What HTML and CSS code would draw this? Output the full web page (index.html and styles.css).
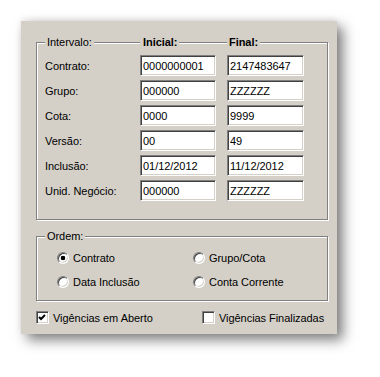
FILE: index.html
```html
<!DOCTYPE html>
<html lang="pt-BR">
<head>
  <meta charset="UTF-8">
  <title>Filtro de Vigências</title>
  <link rel="stylesheet" href="styles.css">
</head>
<body>

  <div class="panel">

    <div class="group group-intervalo">
      <div class="grid head">
        <span class="caption">Intervalo:</span>
        <span class="caption bold first">Inicial:</span>
        <span class="caption bold">Final:</span>
      </div>

      <div class="grid rows">
        <label>Contrato:</label>
        <input type="text" class="field" value="0000000001">
        <input type="text" class="field" value="2147483647">

        <label>Grupo:</label>
        <input type="text" class="field" value="000000">
        <input type="text" class="field" value="ZZZZZZ">

        <label>Cota:</label>
        <input type="text" class="field" value="0000">
        <input type="text" class="field" value="9999">

        <label>Versão:</label>
        <input type="text" class="field" value="00">
        <input type="text" class="field" value="49">

        <label>Inclusão:</label>
        <input type="text" class="field" value="01/12/2012">
        <input type="text" class="field" value="11/12/2012">

        <label>Unid. Negócio:</label>
        <input type="text" class="field" value="000000">
        <input type="text" class="field" value="ZZZZZZ">
      </div>
    </div>

    <div class="group group-ordem">
      <div class="head">
        <span class="caption">Ordem:</span>
      </div>

      <div class="options">
        <label class="option"><input type="radio" name="ordem" checked> Contrato</label>
        <label class="option"><input type="radio" name="ordem"> Grupo/Cota</label>
        <label class="option"><input type="radio" name="ordem"> Data Inclusão</label>
        <label class="option"><input type="radio" name="ordem"> Conta Corrente</label>
      </div>
    </div>

    <div class="checks">
      <label class="option">
        <input type="checkbox" checked>
        Vigências em Aberto
      </label>
      <label class="option">
        <input type="checkbox">
        Vigências Finalizadas
      </label>
    </div>

  </div>

</body>
</html>
```

FILE: styles.css
```css
:root {
  --face: #d4d0c8;
  --shadow: #808080;
  --dark: #404040;
  --light: #ffffff;
}

* {
  box-sizing: border-box;
}

body {
  margin: 0;
  padding: 21px;
  background: #fff;
  font-family: 'Liberation Sans', Arial, sans-serif;
  font-size: 11px;
  letter-spacing: -0.05px;
  color: #000;
}

.panel {
  width: 316px;
  height: 313px;
  padding: 21px 9px 0 15px;
  background: var(--face);
  box-shadow: 6px 6px 12px rgba(0, 0, 0, 0.5), 0 -2px 6px rgba(0, 0, 0, 0.08);
}

/* ---------- Grupos (bordas gravadas) ---------- */
.group {
  border: 1px solid var(--shadow);
  box-shadow: inset 1px 1px 0 var(--light), 1px 1px 0 var(--light);
  padding-left: 8px;
}

.head {
  margin-top: -7px;
  height: 13px;
  line-height: 13px;
}

.caption {
  background: var(--face);
  padding: 0 2px;
  justify-self: start;
}

.bold {
  font-weight: bold;
}

.first {
  padding-left: 3px;
}

.grid {
  display: grid;
  grid-template-columns: 84px 76px 77px;
  column-gap: 11px;
}

.group-intervalo {
  padding-bottom: 18px;
}

.rows {
  margin-top: 6px;
  row-gap: 4px;
  align-items: center;
}

.field {
  height: 21px;
  margin: 0;
  padding: 0 2px;
  border: 1px solid;
  border-color: var(--shadow) var(--light) var(--light) var(--shadow);
  box-shadow: inset 1px 1px 0 var(--dark), inset -1px -1px 0 var(--face);
  background: #fff;
  font: inherit;
  letter-spacing: inherit;
  color: #000;
  outline: none;
}

/* ---------- Ordem ---------- */
.group-ordem {
  margin-top: 16px;
  padding: 0 0 12px 20px;
}

.group-ordem .head {
  margin-left: -12px;
}

.options {
  display: grid;
  grid-template-columns: 136px auto;
  row-gap: 11px;
  margin-top: 8px;
}

.option {
  display: flex;
  align-items: center;
  gap: 4px;
  height: 13px;
  white-space: nowrap;
}

input[type="radio"] {
  appearance: none;
  -webkit-appearance: none;
  width: 12px;
  height: 12px;
  margin: 0;
  border-radius: 50%;
  border: 1px solid;
  border-color: var(--shadow) var(--light) var(--light) var(--shadow);
  box-shadow: inset 1px 1px 0 var(--dark), inset -1px -1px 0 var(--face);
  background: #fff;
}

input[type="radio"]:checked {
  background: radial-gradient(circle, #000 0, #000 2px, #fff 2.6px);
}

/* ---------- Checkboxes ---------- */
.checks {
  display: grid;
  grid-template-columns: 166px auto;
  margin-top: 10px;
}

input[type="checkbox"] {
  appearance: none;
  -webkit-appearance: none;
  width: 13px;
  height: 13px;
  margin: 0;
  border: 1px solid;
  border-color: var(--shadow) var(--light) var(--light) var(--shadow);
  box-shadow: inset 1px 1px 0 var(--dark), inset -1px -1px 0 var(--face);
  background: #fff;
}

input[type="checkbox"]:checked {
  background: #fff url("data:image/svg+xml,%3Csvg xmlns='http://www.w3.org/2000/svg' width='11' height='11'%3E%3Cpolyline points='2,5 4,7 8,3' fill='none' stroke='black' stroke-width='2'/%3E%3C/svg%3E") center / 11px 11px no-repeat;
}
```
